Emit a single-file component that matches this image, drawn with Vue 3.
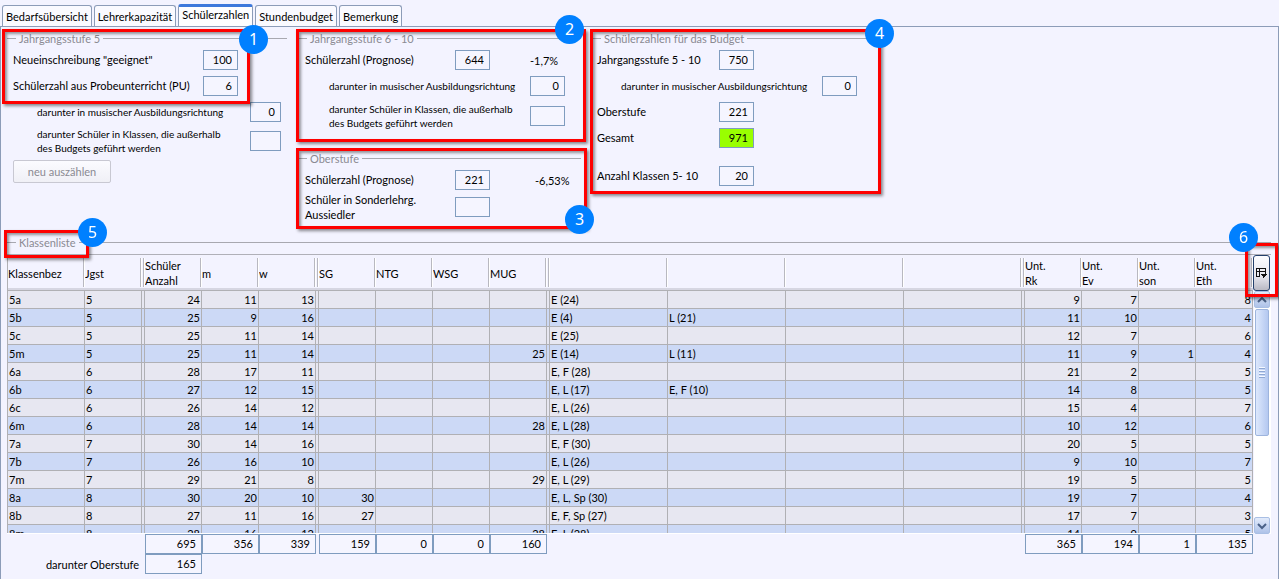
<script setup>
import { ref } from 'vue'

const tabs = ['Bedarfsübersicht', 'Lehrerkapazität', 'Schülerzahlen', 'Stundenbudget', 'Bemerkung']
const active = ref('Schülerzahlen')

const columns = [
  { key: 'bez', cls: 'c-name', head: ['Klassenbez'] },
  { key: 'jgst', cls: 'c-num', head: ['Jgst'] },
  { key: 'g1', cls: 'c-gap', head: [] },
  { key: 'anz', cls: 'c-num', num: true, head: ['Schüler', 'Anzahl'], total: '695' },
  { key: 'm', cls: 'c-num', num: true, head: ['m'], total: '356' },
  { key: 'w', cls: 'c-num', num: true, head: ['w'], total: '339' },
  { key: 'g2', cls: 'c-gap', head: [] },
  { key: 'sg', cls: 'c-num', num: true, head: ['SG'], total: '159' },
  { key: 'ntg', cls: 'c-num', num: true, head: ['NTG'], total: '0' },
  { key: 'wsg', cls: 'c-num', num: true, head: ['WSG'], total: '0' },
  { key: 'mug', cls: 'c-num', num: true, head: ['MUG'], total: '160' },
  { key: 'g3', cls: 'c-gap', head: [] },
  { key: 's1', cls: 'c-lang', head: [] },
  { key: 's2', cls: 'c-lang', head: [] },
  { key: 's3', cls: 'c-lang', head: [] },
  { key: 's4', cls: 'c-lang', head: [] },
  { key: 'g4', cls: 'c-gap', head: [] },
  { key: 'rk', cls: 'c-num', num: true, head: ['Unt.', 'Rk'], total: '365' },
  { key: 'ev', cls: 'c-num', num: true, head: ['Unt.', 'Ev'], total: '194' },
  { key: 'son', cls: 'c-num', num: true, head: ['Unt.', 'son'], total: '1' },
  { key: 'eth', cls: 'c-num', num: true, head: ['Unt.', 'Eth'], total: '135' }
]

const rows = [
  { bez: '5a', jgst: 5, anz: 24, m: 11, w: 13, s1: 'E (24)', rk: 9, ev: 7, eth: 8 },
  { bez: '5b', jgst: 5, anz: 25, m: 9, w: 16, s1: 'E (4)', s2: 'L (21)', rk: 11, ev: 10, eth: 4 },
  { bez: '5c', jgst: 5, anz: 25, m: 11, w: 14, s1: 'E (25)', rk: 12, ev: 7, eth: 6 },
  { bez: '5m', jgst: 5, anz: 25, m: 11, w: 14, mug: 25, s1: 'E (14)', s2: 'L (11)', rk: 11, ev: 9, son: 1, eth: 4 },
  { bez: '6a', jgst: 6, anz: 28, m: 17, w: 11, s1: 'E, F (28)', rk: 21, ev: 2, eth: 5 },
  { bez: '6b', jgst: 6, anz: 27, m: 12, w: 15, s1: 'E, L (17)', s2: 'E, F (10)', rk: 14, ev: 8, eth: 5 },
  { bez: '6c', jgst: 6, anz: 26, m: 14, w: 12, s1: 'E, L (26)', rk: 15, ev: 4, eth: 7 },
  { bez: '6m', jgst: 6, anz: 28, m: 14, w: 14, mug: 28, s1: 'E, L (28)', rk: 10, ev: 12, eth: 6 },
  { bez: '7a', jgst: 7, anz: 30, m: 14, w: 16, s1: 'E, F (30)', rk: 20, ev: 5, eth: 5 },
  { bez: '7b', jgst: 7, anz: 26, m: 16, w: 10, s1: 'E, L (26)', rk: 9, ev: 10, eth: 7 },
  { bez: '7m', jgst: 7, anz: 29, m: 21, w: 8, mug: 29, s1: 'E, L (29)', rk: 19, ev: 5, eth: 5 },
  { bez: '8a', jgst: 8, anz: 30, m: 20, w: 10, sg: 30, s1: 'E, L, Sp (30)', rk: 19, ev: 7, eth: 4 },
  { bez: '8b', jgst: 8, anz: 27, m: 11, w: 16, sg: 27, s1: 'E, F, Sp (27)', rk: 17, ev: 7, eth: 3 },
  { bez: '8m', jgst: 8, anz: 28, m: 16, w: 12, mug: 28, s1: 'E, L (28)', rk: 14, ev: 9, eth: 5 }
]
</script>

<template>
  <div class="app">
    <div class="tabs" role="tablist">
      <button
        v-for="t in tabs"
        :key="t"
        type="button"
        role="tab"
        class="tab"
        :class="{ on: t === active }"
        :aria-selected="t === active"
        @click="active = t"
      >{{ t }}</button>
    </div>

    <main class="panel">
      <div class="groups">
        <section class="group g5">
          <h2 class="legend">Jahrgangsstufe 5</h2>
          <div class="row">
            <label for="neu">Neueinschreibung "geeignet"</label>
            <input id="neu" class="field" value="100" readonly>
          </div>
          <div class="row">
            <label for="pu">Schülerzahl aus Probeunterricht (PU)</label>
            <input id="pu" class="field" value="6" readonly>
          </div>
          <div class="row sub">
            <label for="mus5">darunter in musischer Ausbildungsrichtung</label>
            <input id="mus5" class="field" value="0" readonly>
          </div>
          <div class="row sub tall">
            <label for="aus5">darunter Schüler in Klassen, die außerhalb<br>des Budgets geführt werden</label>
            <input id="aus5" class="field" value="" readonly>
          </div>
          <button type="button" class="recount" disabled>neu auszählen</button>
          <div class="mark mark1"><span class="badge">1</span></div>
        </section>

        <div class="middle">
          <section class="group g6">
            <h2 class="legend">Jahrgangsstufe 6 - 10</h2>
            <div class="row">
              <label for="prog6">Schülerzahl (Prognose)</label>
              <input id="prog6" class="field" value="644" readonly>
              <span class="pct">-1,7%</span>
            </div>
            <div class="row sub">
              <label for="mus6">darunter in musischer Ausbildungsrichtung</label>
              <input id="mus6" class="field" value="0" readonly>
            </div>
            <div class="row sub tall">
              <label for="aus6">darunter Schüler in Klassen, die außerhalb<br>des Budgets geführt werden</label>
              <input id="aus6" class="field" value="" readonly>
            </div>
            <div class="mark mark2"><span class="badge">2</span></div>
          </section>

          <section class="group gober">
            <h2 class="legend">Oberstufe</h2>
            <div class="row">
              <label for="progO">Schülerzahl (Prognose)</label>
              <input id="progO" class="field" value="221" readonly>
              <span class="pct wide">-6,53%</span>
            </div>
            <div class="row two">
              <label for="sonder">Schüler in Sonderlehrg.<br>Aussiedler</label>
              <input id="sonder" class="field" value="" readonly>
            </div>
            <div class="mark mark3"><span class="badge">3</span></div>
          </section>
        </div>

        <section class="group gbud">
          <h2 class="legend">Schülerzahlen für das Budget</h2>
          <div class="row">
            <label for="b510">Jahrgangsstufe 5 - 10</label>
            <input id="b510" class="field" value="750" readonly>
          </div>
          <div class="row sub">
            <label for="bmus">darunter in musischer Ausbildungsrichtung</label>
            <input id="bmus" class="field" value="0" readonly>
          </div>
          <div class="row">
            <label for="bober">Oberstufe</label>
            <input id="bober" class="field" value="221" readonly>
          </div>
          <div class="row">
            <label for="bges">Gesamt</label>
            <input id="bges" class="field sum" value="971" readonly>
          </div>
          <div class="row last">
            <label for="bkl">Anzahl Klassen 5- 10</label>
            <input id="bkl" class="field" value="20" readonly>
          </div>
          <div class="mark mark4"><span class="badge">4</span></div>
        </section>
      </div>

      <section class="list">
        <h2 class="legend">Klassenliste</h2>

        <div class="grid">
          <div class="view">
            <table>
              <colgroup><col v-for="c in columns" :key="c.key" :class="c.cls"></colgroup>
              <thead>
                <tr>
                  <th v-for="c in columns" :key="c.key" scope="col">
                    <div v-for="h in c.head" :key="h">{{ h }}</div>
                  </th>
                </tr>
              </thead>
              <tbody>
                <tr v-for="r in rows" :key="r.bez">
                  <td v-for="c in columns" :key="c.key" :class="{ num: c.num }">{{ r[c.key] }}</td>
                </tr>
              </tbody>
            </table>
          </div>

          <div class="side">
            <button type="button" class="colbtn" aria-label="Spalten auswählen">
              <svg width="11" height="11" viewBox="0 0 11 11" shape-rendering="crispEdges">
                <path d="M0 0.5H10M0.5 0V9M0 3.5H10M0 8.5H4M3.5 0V9M9.5 0V6" fill="none" stroke="#111" />
                <path d="M5 6H11V7H10V8H9V9H8V10H7V8H6V7H5Z" fill="#111" />
              </svg>
            </button>
            <div class="scroll">
              <button type="button" class="arrow" aria-label="Nach oben">
                <svg width="10" height="8" viewBox="0 0 10 8"><path d="M1 6L5 2L9 6" fill="none" stroke="#4a6188" stroke-width="2" /></svg>
              </button>
              <div class="thumb"><i></i><i></i><i></i><i></i></div>
              <div class="space"></div>
              <button type="button" class="arrow" aria-label="Nach unten">
                <svg width="10" height="8" viewBox="0 0 10 8"><path d="M1 2L5 6L9 2" fill="none" stroke="#4a6188" stroke-width="2" /></svg>
              </button>
            </div>
            <div class="mark mark6"><span class="badge">6</span></div>
          </div>
        </div>

        <div class="sums">
          <table>
            <colgroup><col v-for="c in columns" :key="c.key" :class="c.cls"></colgroup>
            <tbody>
              <tr>
                <td v-for="c in columns" :key="c.key">
                  <input v-if="c.total" class="field" :value="c.total" :aria-label="'Summe ' + c.head.join(' ')" readonly>
                </td>
              </tr>
              <tr>
                <td colspan="3" class="sumlabel"><label for="ober">darunter Oberstufe</label></td>
                <td><input id="ober" class="field" value="165" readonly></td>
                <td colspan="17"></td>
              </tr>
            </tbody>
          </table>
        </div>
        <div class="mark mark5"><span class="badge">5</span></div>
      </section>
    </main>
  </div>
</template>

<style>
body {
  background: #f3f3ff;
}
</style>

<style scoped>
.app {
  box-sizing: border-box;
  min-height: 100vh;
  padding-top: 4px;
  display: flex;
  flex-direction: column;
  background: #f3f3ff;
  color: #000;
  font-family: Lato, "Noto Sans", sans-serif;
  font-size: 11px;
  line-height: 15px;
  overflow: hidden;
}
button,
input {
  font: inherit;
  color: inherit;
  margin: 0;
  box-sizing: border-box;
}
.tabs {
  display: flex;
  align-items: flex-end;
  gap: 2px;
  padding-left: 2px;
  height: 22px;
}
.tab {
  height: 21px;
  padding: 0 3px;
  border: 1px solid #8c9cb8;
  border-bottom: 0;
  border-radius: 3px 3px 0 0;
  background: #fafaff;
  white-space: nowrap;
}
.tab.on {
  height: 22px;
  padding-bottom: 4px;
  border-top: 3px solid #3c78dc;
  background: #fdfdff;
}
.panel {
  flex: 1;
  border: 1px solid #8c9cb8;
  border-bottom: 0;
  padding: 4px 7px 0 6px;
}
.groups {
  display: flex;
  align-items: flex-start;
  gap: 11px;
}
.group {
  position: relative;
}
.g5 {
  width: 280px;
}
.middle {
  width: 283px;
}
.gbud {
  width: 288px;
}
.legend {
  display: flex;
  align-items: center;
  gap: 3px;
  margin: 0;
  height: 15px;
  font-size: 11px;
  font-weight: 400;
  color: #8a8a92;
  white-space: nowrap;
}
.legend::before,
.legend::after {
  content: "";
  height: 1px;
  background: #a8a8b0;
}
.legend::before {
  width: 9px;
}
.legend::after {
  flex: 1;
}
.row {
  display: grid;
  align-items: center;
  height: 20px;
  margin-top: 6px;
  white-space: nowrap;
}
.row label {
  padding-bottom: 1px;
}
.legend + .row {
  margin-top: 4px;
}
.g5 .row {
  grid-template-columns: 190px 35px;
  padding-left: 6px;
}
.g5 .row.sub {
  grid-template-columns: 213px 31px;
  padding-left: 30px;
}
.middle .row {
  grid-template-columns: 150px 35px 1fr;
  padding-left: 7px;
}
.middle .row.sub {
  grid-template-columns: 201px 35px;
  padding-left: 31px;
}
.gbud .row {
  grid-template-columns: 122px 35px;
  padding-left: 5px;
}
.gbud .row.sub {
  grid-template-columns: 201px 35px;
  padding-left: 29px;
}
.sub {
  font-size: 10px;
  line-height: 14px;
}
.row.tall {
  height: 28px;
}
.row.tall label,
.row.two label {
  padding-bottom: 0;
}
.g5 .row.tall {
  margin-top: 5px;
}
.row.last {
  margin-top: 18px;
}
.row.two {
  height: 30px;
  margin-top: 2px;
}
.pct {
  padding-left: 40px;
}
.pct.wide {
  padding-left: 45px;
}
.field {
  display: block;
  width: 100%;
  height: 20px;
  padding: 0 5px 1px 1px;
  border: 1px solid #7f9cbf;
  border-radius: 0;
  background: #f5f5ff;
  font-size: 11px;
  text-align: right;
  outline: none;
}
.field.sum {
  background: #99ff00;
}
.recount {
  display: block;
  width: 98px;
  height: 23px;
  margin: 5px 0 0 6px;
  padding: 0;
  border: 1px solid #c8c8d2;
  border-radius: 2px;
  background: linear-gradient(#fbfbff, #f0f0f6);
  color: #8a8a92;
}
.g6 {
  height: 120px;
}
.mark {
  position: absolute;
  box-sizing: border-box;
  border: 3px solid #fe0000;
  box-shadow: 2px 2px 3px rgba(0, 0, 0, 0.45), inset 2px 2px 3px rgba(0, 0, 0, 0.4);
  pointer-events: none;
}
.badge {
  position: absolute;
  width: 29px;
  height: 29px;
  border-radius: 50%;
  background: #0080ff;
  color: #fff;
  font-family: "Noto Sans", sans-serif;
  font-size: 16px;
  line-height: 29px;
  text-align: center;
}
.mark1 {
  inset: -2px 37px auto -5px;
  height: 75px;
}
.mark1 .badge {
  top: -7px;
  right: -21px;
}
.mark2 {
  inset: -2px -5px 9px -2px;
}
.mark2 .badge {
  top: -17px;
  right: -1px;
}
.mark3 {
  inset: -3px -6px -7px -2px;
}
.mark3 .badge {
  right: -10px;
  bottom: -8px;
}
.mark4 {
  inset: -2px -1px -8px -2px;
}
.mark4 .badge {
  top: -13px;
  right: -16px;
}
.list {
  position: relative;
  margin-top: 13px;
}
.mark5 {
  top: -5px;
  left: -3px;
  width: 85px;
  height: 28px;
}
.mark5 .badge {
  top: -15px;
  right: -21px;
}
.grid {
  display: flex;
  margin-top: 4px;
  border-top: 1px solid #b0b0b8;
}
.view {
  flex: 1;
  min-width: 0;
  height: 278px;
  overflow-y: auto;
  scrollbar-width: none;
  border-bottom: 1px solid #fff;
}
table {
  width: 100%;
  table-layout: fixed;
  border-collapse: separate;
  border-spacing: 0;
}
.c-name {
  width: 78px;
}
.c-num {
  width: 57px;
}
.c-gap {
  width: 3px;
}
.view th {
  position: sticky;
  top: 0;
  height: 36px;
  box-sizing: border-box;
  padding: 1px 0 0;
  border-bottom: 1px solid #b0b0b4;
  background: linear-gradient(#f3f3ff 33px, #d6d6e2 33px);
  font-weight: 400;
  text-align: left;
  white-space: nowrap;
}
.view th::after {
  content: "";
  position: absolute;
  top: 3px;
  right: 0;
  width: 1px;
  height: 29px;
  background: #b8b8c0;
  border-right: 1px solid #fff;
}
.view td {
  box-sizing: border-box;
  height: 18px;
  padding: 0 1px;
  border: solid #b0b0b4;
  border-width: 0 1px 1px 0;
  background: #e7e7f1;
  line-height: 17px;
  white-space: nowrap;
}
.view td:first-child,
.view th:first-child {
  border-left: 1px solid #b0b0b4;
}
.view tr:nth-child(even) td {
  background: #ccd9f6;
}
.view .num {
  text-align: right;
}
.side {
  position: relative;
  display: flex;
  flex-direction: column;
  width: 18px;
}
.colbtn {
  display: flex;
  align-items: center;
  justify-content: center;
  height: 36px;
  width: 17px;
  padding: 0;
  border: 1px solid #24406c;
  border-radius: 3px;
  background: linear-gradient(#fdfdff, #e6e6ee 60%, #b9b9c4);
}
.scroll {
  flex: 1;
  display: flex;
  flex-direction: column;
  margin-left: 1px;
  background: #fff;
}
.arrow {
  display: flex;
  align-items: center;
  justify-content: center;
  width: 16px;
  height: 17px;
  padding: 0;
  border: 1px solid #a9bfe4;
  border-radius: 2px;
  background: linear-gradient(#e2ebfb, #aec2e8);
}
.thumb {
  display: flex;
  flex-direction: column;
  align-items: center;
  justify-content: center;
  gap: 1px;
  box-sizing: border-box;
  width: 14px;
  height: 127px;
  margin: 1px;
  border: 1px solid #9db4dd;
  border-radius: 2px;
  background: linear-gradient(90deg, #dde8fc, #b4c8f0);
}
.thumb i {
  width: 6px;
  height: 1px;
  background: #f4f8ff;
  border-bottom: 1px solid #8fa8d4;
}
.space {
  flex: 1;
}
.mark6 {
  top: -12px;
  left: -8px;
  width: 33px;
  height: 54px;
}
.mark6 .badge {
  top: -23px;
  left: -19px;
}
.sums {
  padding-right: 18px;
}
.sums td {
  height: 20px;
  padding: 0;
}
.sums .sumlabel {
  padding-right: 6px;
  text-align: right;
}
</style>
